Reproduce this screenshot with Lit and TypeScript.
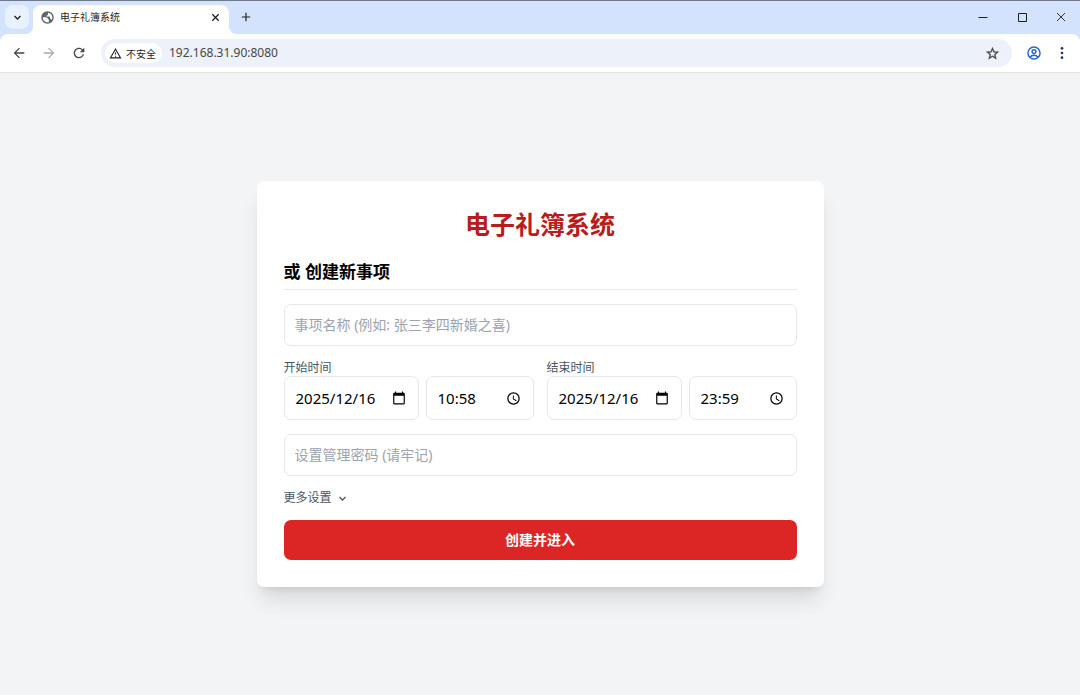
import { LitElement, html, css, svg } from "lit";
import { customElement, property, state } from "lit/decorators.js";

const SANS = css`"Noto Sans", "Noto Sans CJK SC", sans-serif`;

const glyphs = {
  back: svg`<path fill="currentColor" d="M20 11H7.83l5.59-5.59L12 4l-8 8 8 8 1.41-1.41L7.83 13H20v-2z"/>`,
  forward: svg`<path fill="currentColor" d="M4 13h12.17l-5.59 5.59L12 20l8-8-8-8-1.41 1.41L16.17 11H4v2z"/>`,
  reload: svg`<path fill="currentColor" d="M17.65 6.35C16.2 4.9 14.21 4 12 4c-4.42 0-7.99 3.58-7.99 8s3.57 8 7.99 8c3.73 0 6.84-2.55 7.73-6h-2.08c-.82 2.33-3.04 4-5.65 4-3.31 0-6-2.69-6-6s2.69-6 6-6c1.66 0 3.14.69 4.22 1.78L13 11h7V4l-2.35 2.35z"/>`,
  warning: svg`<path fill="currentColor" d="M12 5.99 19.53 19H4.47L12 5.99M12 2 1 21h22L12 2zm1 14h-2v2h2v-2zm0-6h-2v4h2v-4z"/>`,
  star: svg`<path fill="currentColor" stroke="currentColor" stroke-width=".6" d="m22 9.24-7.19-.62L12 2 9.19 8.63 2 9.24l5.46 4.73L5.82 21 12 17.27 18.18 21l-1.63-7.03L22 9.24zM12 15.4l-3.76 2.27 1-4.28-3.32-2.88 4.38-.38L12 6.1l1.71 4.04 4.38.38-3.32 2.88 1 4.28L12 15.4z"/>`,
  profile: svg`<g fill="none" stroke="currentColor" stroke-width="2.4"><circle cx="12" cy="12" r="10.4"/><circle cx="12" cy="9.6" r="3.3"/><path d="M5 19.2c1.8-2.2 4.2-3.3 7-3.3s5.2 1.1 7 3.3"/></g>`,
  menu: svg`<g fill="currentColor"><circle cx="12" cy="4" r="2.3"/><circle cx="12" cy="12" r="2.3"/><circle cx="12" cy="20" r="2.3"/></g>`,
  globe: svg`<circle cx="12" cy="12" r="11.5" fill="#5f6368"/><path fill="#fff" d="M3.2 11.500h6.300c2 0 3.300 1.500 3.300 3.500h1.700v5.700c-6 1-11.500-3-11.300-9.200zM13 3c5 .6 8 4.300 8 8.800 0 2-.6 3.700-1.400 5-.6-1.500-1.600-2.500-3.100-2.500V12c0-1-.9-1.800-1.900-1.800H10V8.500c1.700 0 2.600-.7 2.600-2.200z"/>`,
  chevron: svg`<path fill="none" stroke="currentColor" stroke-width="3.4" d="m4 8 8 8 8-8"/>`,
  close: svg`<path fill="none" stroke="currentColor" stroke-width="3.4" d="m3.500 3.500 17 17m0-17-17 17"/>`,
  plus: svg`<path fill="none" stroke="currentColor" stroke-width="2.8" d="M12 2v20M2 12h20"/>`,
  minimise: svg`<path stroke="currentColor" stroke-width="2" d="M3 13h18"/>`,
  maximise: svg`<path fill="none" stroke="currentColor" stroke-width="2" d="M5 5h16v16H5z"/>`,
  windowClose: svg`<path fill="none" stroke="currentColor" stroke-width="1.8" d="m4 4 16 16m0-16L4 20"/>`,
  calendar: svg`<path fill="currentColor" d="M20 3h-1V1h-2v2H7V1H5v2H4c-1.1 0-2 .9-2 2v16c0 1.1.9 2 2 2h16c1.1 0 2-.9 2-2V5c0-1.1-.9-2-2-2zm0 18H4V8h16v13z"/>`,
  clock: svg`<path fill="currentColor" d="M12 2a10 10 0 1 0 0 20 10 10 0 0 0 0-20zm0 18a8 8 0 1 1 0-16 8 8 0 0 1 0 16zm.5-13H11v6l5.2 3.2.8-1.3-4.5-2.7z"/>`,
};

const icon = (name: keyof typeof glyphs, size: number) =>
  html`<svg viewBox="0 0 24 24" width=${size} height=${size} aria-hidden="true">${glyphs[name]}</svg>`;

const base = css`
  * {
    box-sizing: border-box;
  }
  button,
  input {
    margin: 0;
    padding: 0;
    border: 0;
    background: none;
    color: inherit;
    font: inherit;
    outline: none;
  }
  button {
    display: flex;
    align-items: center;
    justify-content: center;
  }
  svg {
    display: block;
    flex: none;
  }
`;

@customElement("browser-frame")
export class BrowserFrame extends LitElement {
  @property() heading = "";
  @property() address = "";

  static styles = [
    base,
    css`
      :host {
        display: block;
        color: #1f1f1f;
        background: #d3e3fd;
        border-top: 1px solid #74798a;
      }
      .strip {
        display: flex;
        height: 33px;
        padding-left: 5px;
      }
      .search {
        width: 24px;
        height: 24px;
        margin: 4px 4px 0 0;
        border-radius: 8px;
        background: #e9f0fe;
      }
      .tab {
        position: relative;
        display: flex;
        align-items: center;
        gap: 6px;
        width: 196px;
        height: 29px;
        margin-top: 4px;
        padding: 0 8px 5px;
        border-radius: 8px 8px 0 0;
        background: #fff;
        font-size: 10px;
        line-height: 16px;
      }
      .tab::before,
      .tab::after {
        content: "";
        position: absolute;
        bottom: 0;
        width: 8px;
        height: 8px;
      }
      .tab::before {
        right: 100%;
        background: radial-gradient(circle at 0 0, transparent 8px, #fff 8px);
      }
      .tab::after {
        left: 100%;
        background: radial-gradient(circle at 100% 0, transparent 8px, #fff 8px);
      }
      .name {
        flex: 1;
      }
      .close {
        width: 12px;
        height: 16px;
      }
      .add {
        width: 24px;
        height: 24px;
        margin: 4px 0 0 5px;
      }
      .window {
        display: flex;
        margin-left: auto;
      }
      .window button {
        width: 39px;
        height: 32px;
      }
      .toolbar {
        display: flex;
        align-items: center;
        gap: 6px;
        height: 39px;
        padding: 0 6px 0 7px;
        border-bottom: 1px solid #e2e4e8;
        border-radius: 8px 8px 0 0;
        background: #fff;
        color: #474747;
      }
      .tool {
        width: 24px;
        height: 24px;
      }
      .dim {
        color: #ababab;
      }
      .bar {
        display: flex;
        flex: 1;
        align-items: center;
        gap: 7px;
        height: 28px;
        margin: 0 4px;
        padding: 0 8px 0 4px;
        border-radius: 14px;
        background: #edf1fa;
      }
      .security {
        gap: 4px;
        height: 20px;
        padding: 0 6px 0 4px;
        border-radius: 10px;
        background: #fff;
        color: #1f1f1f;
        font-size: 10px;
        white-space: nowrap;
      }
      .url {
        flex: 1;
        min-width: 0;
        font-size: 12px;
        line-height: 18px;
      }
      .account {
        display: flex;
        gap: 4px;
      }
      .profile {
        color: #2463d1;
      }
      .menu {
        color: #1d3461;
      }
    `,
  ];

  render() {
    return html`
      <div class="strip">
        <button class="search" aria-label="搜索标签页">${icon("chevron", 9)}</button>
        <div class="tab">
          ${icon("globe", 13)}
          <span class="name">${this.heading}</span>
          <button class="close" aria-label="关闭标签页">${icon("close", 9)}</button>
        </div>
        <button class="add" aria-label="新标签页">${icon("plus", 10)}</button>
        <div class="window">
          <button aria-label="最小化">${icon("minimise", 12)}</button>
          <button aria-label="最大化">${icon("maximise", 12)}</button>
          <button aria-label="关闭">${icon("windowClose", 12)}</button>
        </div>
      </div>
      <div class="toolbar">
        <button class="tool" aria-label="后退">${icon("back", 16)}</button>
        <button class="tool dim" aria-label="前进">${icon("forward", 16)}</button>
        <button class="tool" aria-label="重新加载">${icon("reload", 16)}</button>
        <div class="bar">
          <button class="security">${icon("warning", 13)}不安全</button>
          <input class="url" aria-label="地址" .value=${this.address} />
          <button class="tool" aria-label="收藏">${icon("star", 15)}</button>
        </div>
        <div class="account">
          <button class="tool profile" aria-label="个人资料">${icon("profile", 14)}</button>
          <button class="tool menu" aria-label="菜单">${icon("menu", 14)}</button>
        </div>
      </div>
    `;
  }
}

@customElement("event-form")
export class EventForm extends LitElement {
  @state() private start = { date: "2025/12/16", time: "10:58" };
  @state() private end = { date: "2025/12/16", time: "23:59" };

  static styles = [
    base,
    css`
      :host {
        display: block;
        width: 100%;
        max-width: 567px;
      }
      .card {
        display: flex;
        flex-direction: column;
        gap: 14px;
        padding: 27px;
        border-radius: 7px;
        background: #fff;
        box-shadow: 0 17px 21px -4px rgb(0 0 0 / 0.1), 0 7px 8px -5px rgb(0 0 0 / 0.1);
      }
      h1 {
        margin: 0 0 5px;
        color: #b91c1c;
        font-size: 25px;
        line-height: 32px;
        text-align: center;
      }
      h2 {
        margin: 0;
        padding-bottom: 4px;
        border-bottom: 1px solid #e5e7eb;
        color: #000;
        font-size: 17px;
        line-height: 26px;
      }
      .field {
        width: 100%;
        height: 42px;
        padding: 0 10px 2px;
        border: 1px solid #e5e7eb;
        border-radius: 7px;
        font-size: 14px;
      }
      .field::placeholder {
        color: #9ca3af;
        opacity: 1;
      }
      .times {
        display: grid;
        grid-template-columns: 1fr 1fr;
        gap: 13px;
      }
      label {
        display: block;
        color: #4b5563;
        font-size: 12px;
        line-height: 16px;
      }
      .pair {
        display: grid;
        grid-template-columns: 5fr 4fr;
        gap: 7px;
      }
      .picker {
        display: flex;
        align-items: center;
        height: 44px;
        padding: 0 12px 0 11px;
        border: 1px solid #e5e7eb;
        border-radius: 7px;
        color: #000;
        font-size: 15px;
      }
      .picker input {
        flex: 1;
        width: 0;
        min-width: 0;
      }
      .more {
        align-self: flex-start;
        gap: 6px;
        color: #4b5563;
        font-size: 12px;
        line-height: 16px;
      }
      .submit {
        height: 40px;
        padding-bottom: 2px;
        border-radius: 7px;
        background: #dc2626;
        color: #fff;
        font-size: 14px;
        font-weight: 700;
      }
    `,
  ];

  private moment(id: string, title: string, value: { date: string; time: string }) {
    return html`
      <div>
        <label for=${id}>${title}</label>
        <div class="pair">
          <div class="picker">
            <input id=${id} .value=${value.date} />
            <button type="button" aria-label="选择日期">${icon("calendar", 14)}</button>
          </div>
          <div class="picker">
            <input aria-label=${title} .value=${value.time} />
            <button type="button" aria-label="选择时间">${icon("clock", 15)}</button>
          </div>
        </div>
      </div>
    `;
  }

  render() {
    return html`
      <form class="card" @submit=${(e: Event) => e.preventDefault()}>
        <h1>电子礼簿系统</h1>
        <h2>或 创建新事项</h2>
        <input class="field" aria-label="事项名称" placeholder="事项名称 (例如: 张三李四新婚之喜)" />
        <div class="times">
          ${this.moment("start", "开始时间", this.start)} ${this.moment("end", "结束时间", this.end)}
        </div>
        <input class="field" type="password" aria-label="管理密码" placeholder="设置管理密码 (请牢记)" />
        <button class="more" type="button">更多设置 ${icon("chevron", 9)}</button>
        <button class="submit" type="submit">创建并进入</button>
      </form>
    `;
  }
}

@customElement("app-root")
export class AppRoot extends LitElement {
  static styles = css`
    :host {
      display: flex;
      flex-direction: column;
      min-height: 100vh;
      background: #f3f4f6;
      font-family: ${SANS};
    }
    main {
      display: flex;
      flex: 1;
      align-items: center;
      justify-content: center;
    }
  `;

  render() {
    return html`
      <browser-frame heading="电子礼簿系统" address="192.168.31.90:8080"></browser-frame>
      <main><event-form></event-form></main>
    `;
  }
}
